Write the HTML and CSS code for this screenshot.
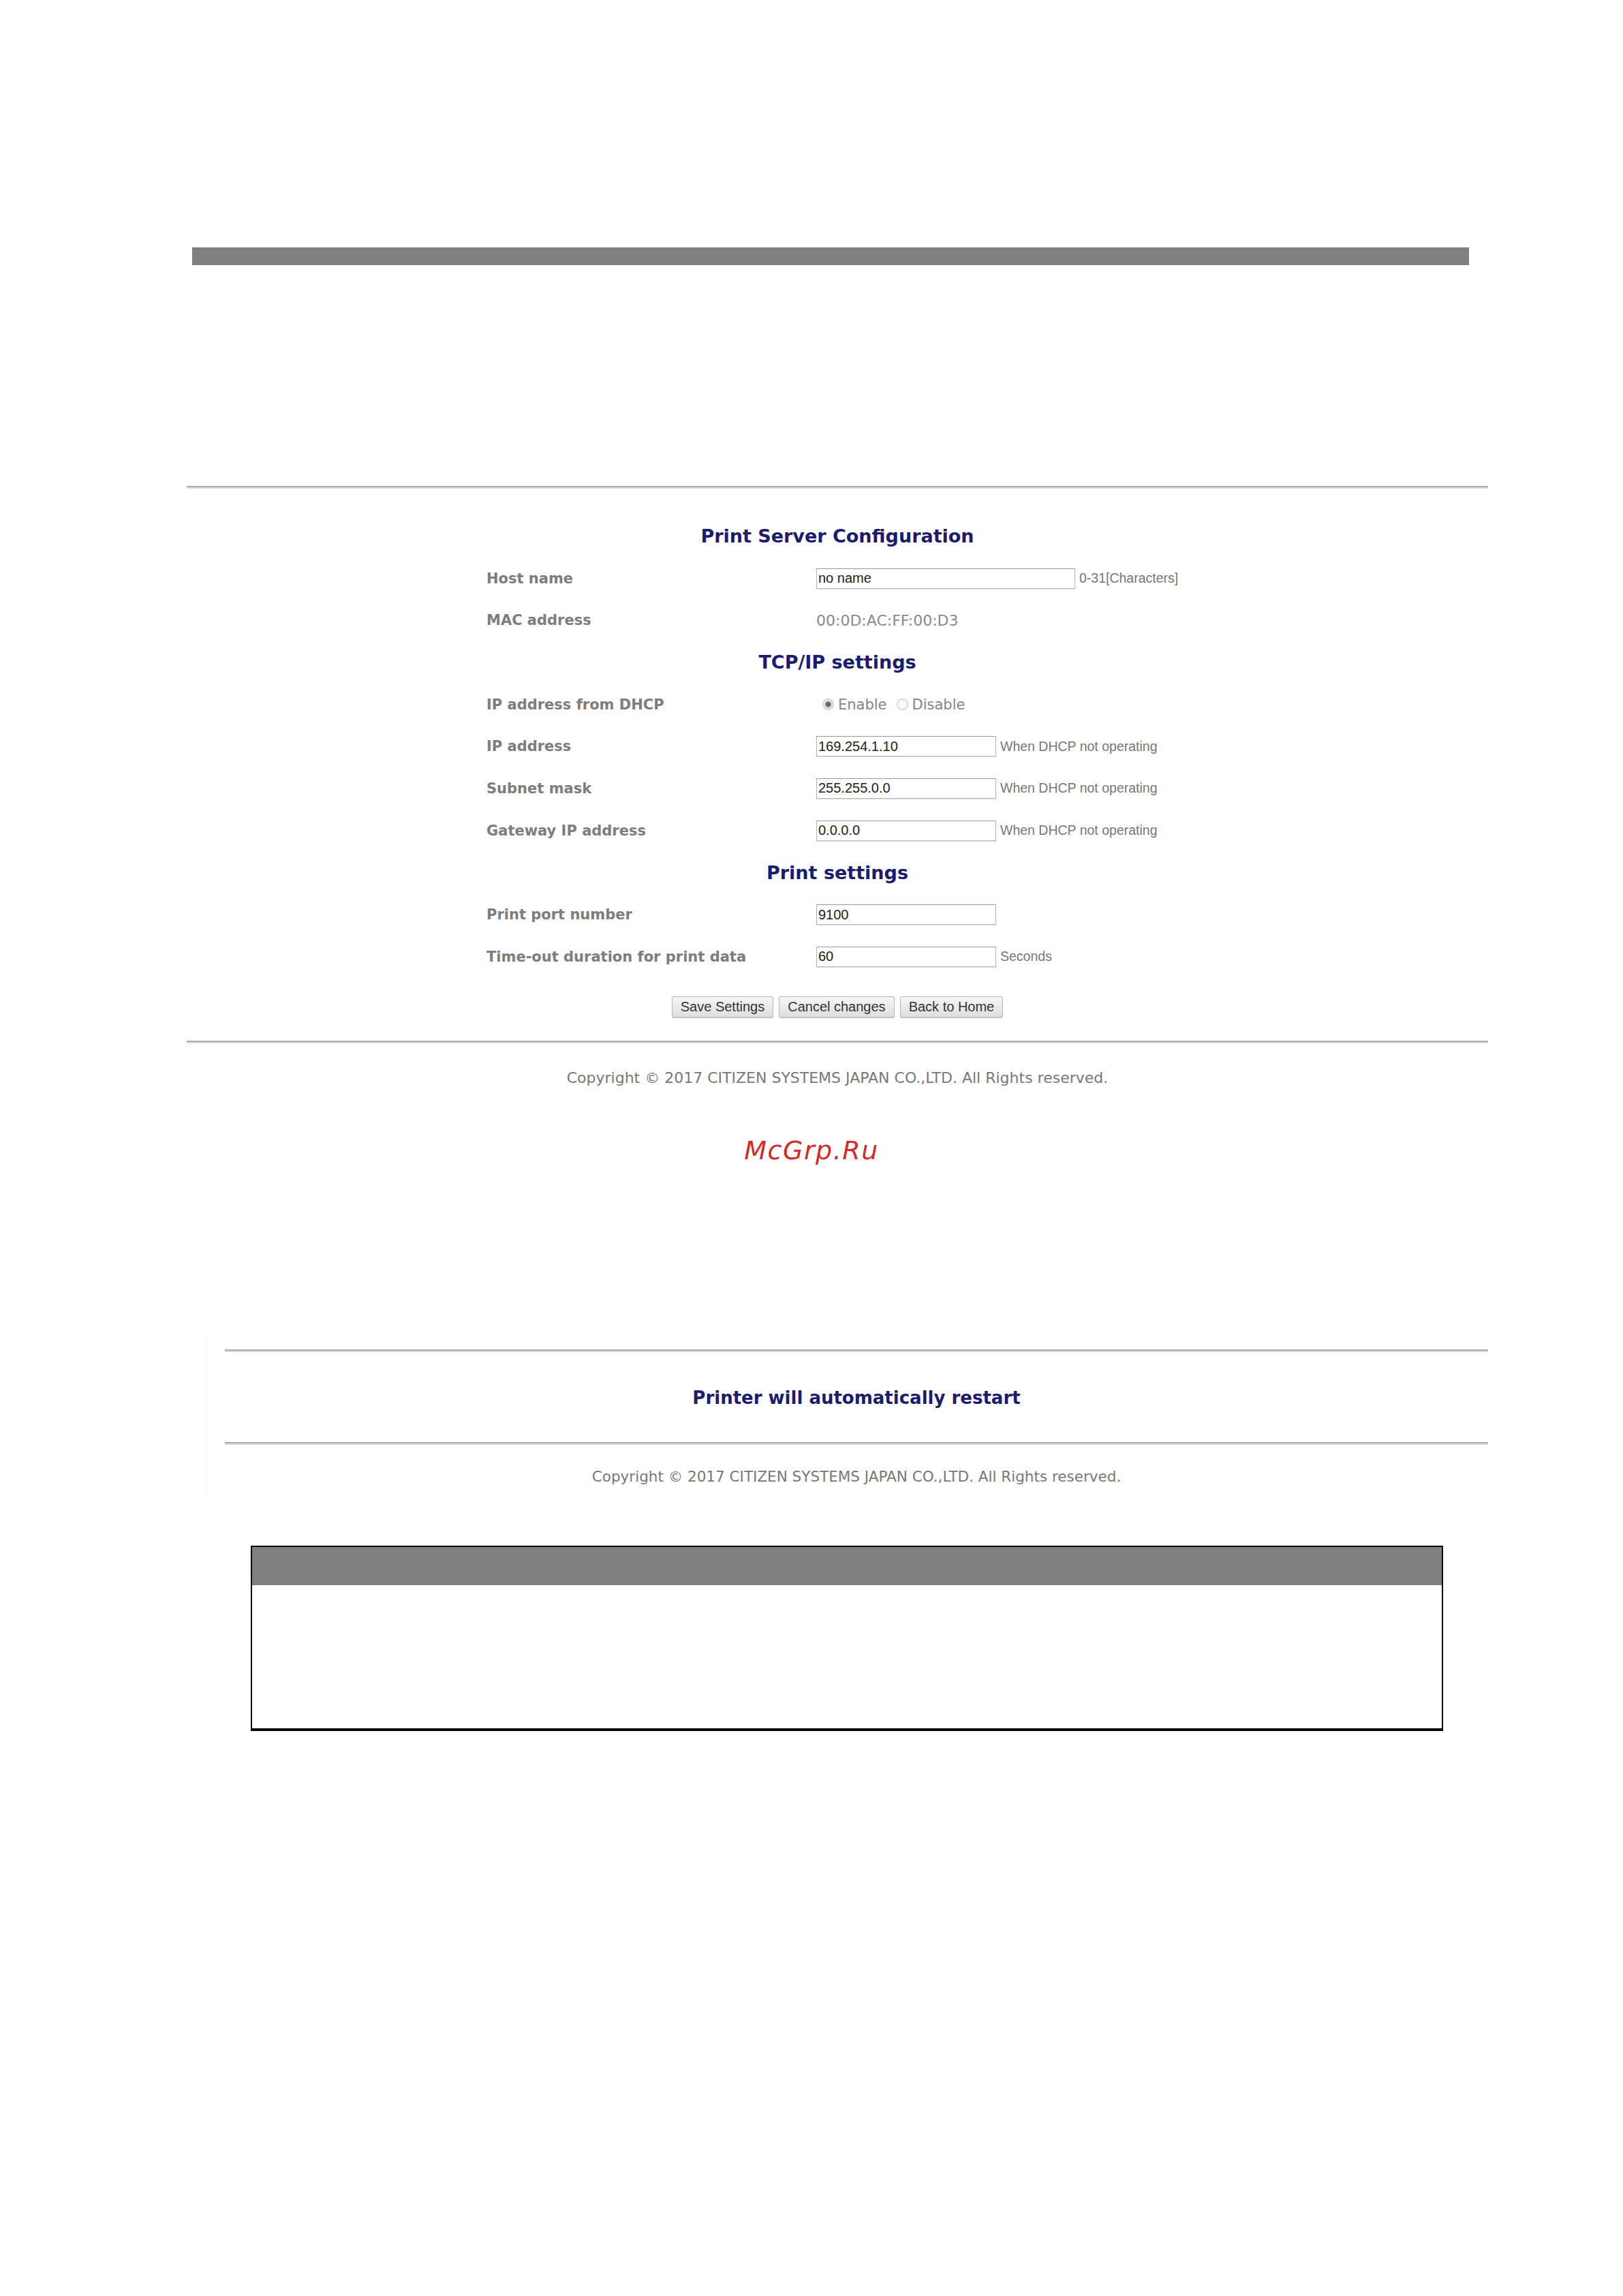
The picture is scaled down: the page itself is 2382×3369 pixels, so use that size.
FILE: index.html
```html
<!DOCTYPE html>
<html lang="en">
<head>
  <meta charset="UTF-8">
  <meta name="viewport" content="width=device-width, initial-scale=1.0">
  <title>Print Server Configuration</title>
  <link rel="stylesheet" href="styles.css">
</head>
<body>
<div class="topbar"></div>

<!-- Screen 1: configuration page -->
<div class="screen">
  <hr class="rule">
  <form class="config">
    <h2>Print Server Configuration</h2>
    <label>Host name</label>
    <div class="value"><input class="wide" type="text" value="no name"><span class="hint">0-31[Characters]</span></div>
    <label>MAC address</label>
    <div class="value mac">00:0D:AC:FF:00:D3</div>

    <h2>TCP/IP settings</h2>
    <label>IP address from DHCP</label>
    <div class="value radios">
      <input type="radio" name="dhcp" checked><span>Enable</span>
      <input type="radio" name="dhcp"><span>Disable</span>
    </div>
    <label>IP address</label>
    <div class="value"><input type="text" value="169.254.1.10"><span class="hint">When DHCP not operating</span></div>
    <label>Subnet mask</label>
    <div class="value"><input type="text" value="255.255.0.0"><span class="hint">When DHCP not operating</span></div>
    <label>Gateway IP address</label>
    <div class="value"><input type="text" value="0.0.0.0"><span class="hint">When DHCP not operating</span></div>

    <h2>Print settings</h2>
    <label>Print port number</label>
    <div class="value"><input type="text" value="9100"></div>
    <label>Time-out duration for print data</label>
    <div class="value"><input type="text" value="60"><span class="hint">Seconds</span></div>
  </form>
  <div class="buttons">
    <button type="button">Save Settings</button>
    <button type="button">Cancel changes</button>
    <button type="button">Back to Home</button>
  </div>
  <hr class="rule rule-bottom">
  <p class="copyright">Copyright &copy; 2017 CITIZEN SYSTEMS JAPAN CO.,LTD. All Rights reserved.</p>
</div>

<p class="watermark">McGrp.Ru</p>

<!-- Screen 2: restart message -->
<div class="screen screen-restart">
  <hr class="rule">
  <p class="message">Printer will automatically restart</p>
  <hr class="rule rule-restart">
  <p class="copyright">Copyright &copy; 2017 CITIZEN SYSTEMS JAPAN CO.,LTD. All Rights reserved.</p>
</div>

<div class="note">
  <div class="note-head"></div>
  <div class="note-body"></div>
</div>
</body>
</html>
```

FILE: styles.css
```css
/* General */
body {
  margin: 0;
  padding: 0;
  background: #fff;
  font-family: "DejaVu Sans", Verdana, sans-serif;
  color: #333;
}
.topbar {
  margin: 363px 0 0 282px;
  width: 1874px;
  height: 26px;
  background: #808080;
}
.screen {
  margin: 324px 0 0 274px;
  width: 1910px;
}
.rule {
  margin: 0;
  height: 0;
  border: none;
  border-top: 2px solid #ababab;
  border-bottom: 2px solid #dadada;
}

/* Config form */
.config {
  width: 1030px;
  margin: 39px auto 0;
  display: grid;
  grid-template-columns: 484px 1fr;
  grid-auto-rows: 61.7px;
  align-items: center;
}
.config h2 {
  grid-column: 1 / 3;
  margin: 0;
  text-align: center;
  font-size: 27px;
  color: #1c1c6e;
}
.config label {
  font-weight: bold;
  font-size: 21px;
  color: #7d7d7d;
}
.value {
  display: flex;
  align-items: center;
}
.value input[type="text"] {
  box-sizing: border-box;
  width: 264px;
  height: 30px;
  margin: 0;
  padding: 0 2px;
  border: 1px solid #b4b4b4;
  border-top-color: #9a9a9a;
  box-shadow: 0 1px 1px #e4e4e4;
  font-family: "Liberation Sans", Arial, sans-serif;
  font-size: 20px;
  color: #222;
}
.value input.wide {
  width: 380px;
}
.hint {
  margin-left: 6px;
  font-family: "Liberation Sans", Arial, sans-serif;
  font-size: 19.5px;
  color: #777;
}
.mac {
  font-size: 22px;
  color: #8a8a8a;
}
.radios {
  font-size: 21px;
  color: #858585;
}
.radios input {
  appearance: none;
  box-sizing: border-box;
  width: 17px;
  height: 17px;
  margin: 0 6px 0 9px;
  border: 1px solid #c4c4c4;
  border-radius: 50%;
  background: radial-gradient(circle, #fafafa 40%, #e2e2e2 100%);
}
.radios input:checked {
  background: radial-gradient(circle, #6a6a6a 0, #6a6a6a 30%, #dcdcdc 45%, #f0f0f0 100%);
}
.radios span + input {
  margin-left: 14px;
}

/* Buttons */
.buttons {
  display: flex;
  justify-content: center;
  gap: 8px;
  margin-top: 27px;
}
.buttons button {
  height: 31px;
  padding: 0 12px;
  border: 1px solid #b8b8b8;
  border-radius: 2px;
  background: linear-gradient(#f6f6f6, #dedede);
  box-shadow: 0 1px 1px #ccc;
  font-family: "Liberation Sans", Arial, sans-serif;
  font-size: 20px;
  color: #333;
}
.rule-bottom {
  margin-top: 34px;
}
.copyright {
  margin: 36px 0 0;
  line-height: 30px;
  text-align: center;
  font-size: 22px;
  color: #787878;
}

/* Watermark */
.watermark {
  margin: 66px 0 0;
  line-height: 50px;
  text-align: center;
  font-size: 38px;
  font-style: italic;
  letter-spacing: 1.5px;
  color: #d42a2a;
}

/* Screen 2 */
.screen-restart {
  margin: 252px 0 0 302px;
  width: 1882px;
  box-sizing: border-box;
  padding: 15px 0 10px 27px;
  border-left: 1px solid #f0f0f8;
}
.message {
  margin: 47px 0 0;
  line-height: 40px;
  text-align: center;
  font-weight: bold;
  font-size: 26px;
  color: #1c1c6e;
}
.rule-restart {
  margin-top: 45px;
}
.screen-restart .copyright {
  margin-top: 32px;
  font-size: 21.5px;
}

/* Note box */
.note {
  margin: 76px 0 0 368px;
  width: 1750px;
  box-sizing: border-box;
  border: 2px solid #000;
  border-bottom-width: 4px;
}
.note-head {
  height: 56px;
  background: #808080;
}
.note-body {
  height: 210px;
}
```
